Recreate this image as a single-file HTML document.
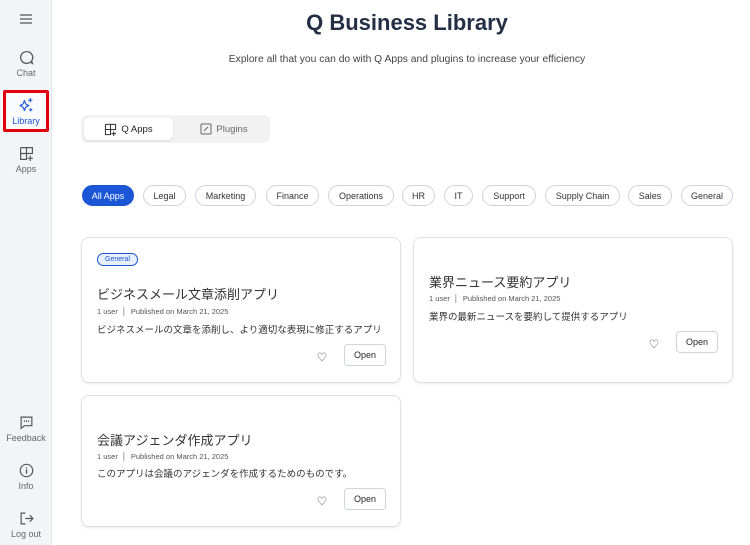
<!DOCTYPE html>
<html><head><meta charset="utf-8"><style>
*{margin:0;padding:0;box-sizing:border-box}
body{width:750px;height:545px;overflow:hidden;background:#fff;font-family:"Liberation Sans","Noto Sans CJK JP",sans-serif;color:#333;position:relative}
.sb{position:absolute;left:0;top:0;width:52px;height:545px;background:#f3f4f7;border-right:1px solid #e3e5ea}
.ni{position:absolute;left:0;width:52px;text-align:center;font-size:9px;color:#666}
.ni svg{display:block;margin:0 auto 3px}
.a{position:absolute}
.title{left:52px;width:710px;top:10px;text-align:center;font-size:22px;font-weight:bold;color:#232f45}
.sub{left:52px;width:710px;top:54px;text-align:center;font-size:10.3px;color:#444}
.tabs{left:81px;top:115px;width:189px;height:28px;background:#f2f2f2;border-radius:6px}
.tab{position:absolute;top:3px;height:22px;font-size:9.5px;display:flex;align-items:center;justify-content:center;gap:4px}
.pill{position:absolute;top:185px;height:21px;border:1px solid #cfd3da;border-radius:11px;font-size:9px;color:#333;display:flex;align-items:center;justify-content:center}
.card{position:absolute;border:1px solid #dfe1e5;border-radius:8px;background:#fff;box-shadow:0 1px 2px rgba(0,0,0,.08)}
.ct{position:absolute;left:15px;font-size:13px;color:#333}
.cm{position:absolute;left:15px;font-size:7.5px;color:#555}
.cd{position:absolute;left:15px;font-size:9.5px;color:#333}
.ob{position:absolute;width:42px;height:22px;border:1px solid #cfd3da;border-radius:4px;font-size:9px;display:flex;align-items:center;justify-content:center;color:#222}
.hrt{position:absolute;font-size:10px;color:#555}
</style></head><body>
<div class="sb">
 <div class="ni" style="top:13px"><svg width="14" height="12" viewBox="0 0 14 12"><path d="M1 2h12M1 6h12M1 10h12" stroke="#555" stroke-width="1.3"/></svg></div>
 <div class="ni" style="top:50px"><svg width="15" height="15" viewBox="0 0 14 14"><path d="M7 1.5a5.5 5.5 0 1 0 3.5 9.8l2 1.2-.8-2.2A5.5 5.5 0 0 0 7 1.5z" fill="none" stroke="#555" stroke-width="1.2"/></svg>Chat</div>
 <div class="a" style="left:3px;top:90px;width:46px;height:42px;border:3px solid #e00010;border-radius:2px;background:#fafbfd"></div>
 <div class="ni" style="top:97px;color:#1a56d6"><svg width="16" height="16" viewBox="0 0 15 15"><path d="M6 3C6.5 6 7.5 7.5 10.5 8 7.5 8.5 6.5 10 6 13 5.5 10 4.5 8.5 1.5 8 4.5 7.5 5.5 6 6 3z" fill="none" stroke="#1a56d6" stroke-width="1.1"/><path d="M11.5 1v4M9.5 3h4M12 10.5v3M10.5 12h3" stroke="#1a56d6" stroke-width="1"/></svg>Library</div>
 <div class="ni" style="top:146px"><svg width="15" height="15" viewBox="0 0 14 14"><path d="M1.5 1.5h11v6M1.5 1.5v11h6M7 1.5v11M1.5 7h11M10.5 9v5M8 11.5h5" fill="none" stroke="#555" stroke-width="1.1"/></svg>Apps</div>
 <div class="ni" style="top:415px"><svg width="15" height="15" viewBox="0 0 14 14"><path d="M2 2h10v8H5l-3 2.5z" fill="none" stroke="#555" stroke-width="1.1"/><path d="M5 5v1.5M7 5v1.5M9 5v1.5" stroke="#555"/></svg>Feedback</div>
 <div class="ni" style="top:463px"><svg width="15" height="15" viewBox="0 0 14 14"><circle cx="7" cy="7" r="5.8" fill="none" stroke="#555" stroke-width="1.1"/><path d="M7 6v4M7 4v1" stroke="#555" stroke-width="1.2"/></svg>Info</div>
 <div class="ni" style="top:511px"><svg width="15" height="15" viewBox="0 0 14 14"><path d="M6 2H2v10h4M6 7h7M10 4l3 3-3 3" fill="none" stroke="#555" stroke-width="1.1"/></svg>Log out</div>
</div>
<div class="a title">Q Business Library</div>
<div class="a sub">Explore all that you can do with Q Apps and plugins to increase your efficiency</div>
<div class="a tabs">
 <div class="tab" style="left:3px;width:89px;background:#fff;border-radius:5px;box-shadow:0 1px 2px rgba(0,0,0,.1);color:#222"><svg width="13" height="13" viewBox="0 0 14 14"><path d="M1.5 1.5h11v6M1.5 1.5v11h6M7 1.5v11M1.5 7h11M10.5 9v5M8 11.5h5" fill="none" stroke="#333" stroke-width="1.1"/></svg>Q Apps</div>
 <div class="tab" style="left:100px;width:86px;color:#666"><svg width="12" height="12" viewBox="0 0 12 12"><rect x="1" y="1" width="10" height="10" rx="1" fill="none" stroke="#666"/><path d="M4 8l4-4" stroke="#666"/></svg>Plugins</div>
</div>
<div class="pill" style="left:82px;width:52px;background:#1a56d6;border-color:#1a56d6;color:#fff">All Apps</div>
<div class="pill" style="left:143px;width:43px">Legal</div>
<div class="pill" style="left:195px;width:61px">Marketing</div>
<div class="pill" style="left:266px;width:53px">Finance</div>
<div class="pill" style="left:328px;width:66px">Operations</div>
<div class="pill" style="left:402px;width:33px">HR</div>
<div class="pill" style="left:444px;width:29px">IT</div>
<div class="pill" style="left:482px;width:54px">Support</div>
<div class="pill" style="left:545px;width:75px">Supply Chain</div>
<div class="pill" style="left:628px;width:44px">Sales</div>
<div class="pill" style="left:681px;width:52px">General</div>

<div class="card" style="left:81px;top:237px;width:320px;height:146px">
 <div class="a" style="left:15px;top:15px;width:41px;height:13px;border:1px solid #1a56d6;border-radius:7px;background:#e8effc;font-size:7px;color:#1a56d6;text-align:center;line-height:11px">General</div>
 <div class="ct" style="top:46px">ビジネスメール文章添削アプリ</div>
 <div class="cm" style="top:69px">1 user &nbsp;│&nbsp; Published on March 21, 2025</div>
 <div class="cd" style="top:84px">ビジネスメールの文章を添削し、より適切な表現に修正するアプリ</div>
 <div class="hrt" style="left:235px;top:111px">♡</div>
 <div class="ob" style="left:262px;top:106px">Open</div>
</div>
<div class="card" style="left:413px;top:237px;width:320px;height:146px">
 <div class="ct" style="top:34px">業界ニュース要約アプリ</div>
 <div class="cm" style="top:56px">1 user &nbsp;│&nbsp; Published on March 21, 2025</div>
 <div class="cd" style="top:71px">業界の最新ニュースを要約して提供するアプリ</div>
 <div class="hrt" style="left:235px;top:98px">♡</div>
 <div class="ob" style="left:262px;top:93px">Open</div>
</div>
<div class="card" style="left:81px;top:395px;width:320px;height:132px">
 <div class="ct" style="top:34px">会議アジェンダ作成アプリ</div>
 <div class="cm" style="top:56px">1 user &nbsp;│&nbsp; Published on March 21, 2025</div>
 <div class="cd" style="top:70px">このアプリは会議のアジェンダを作成するためのものです。</div>
 <div class="hrt" style="left:235px;top:97px">♡</div>
 <div class="ob" style="left:262px;top:92px">Open</div>
</div>
</body></html>
